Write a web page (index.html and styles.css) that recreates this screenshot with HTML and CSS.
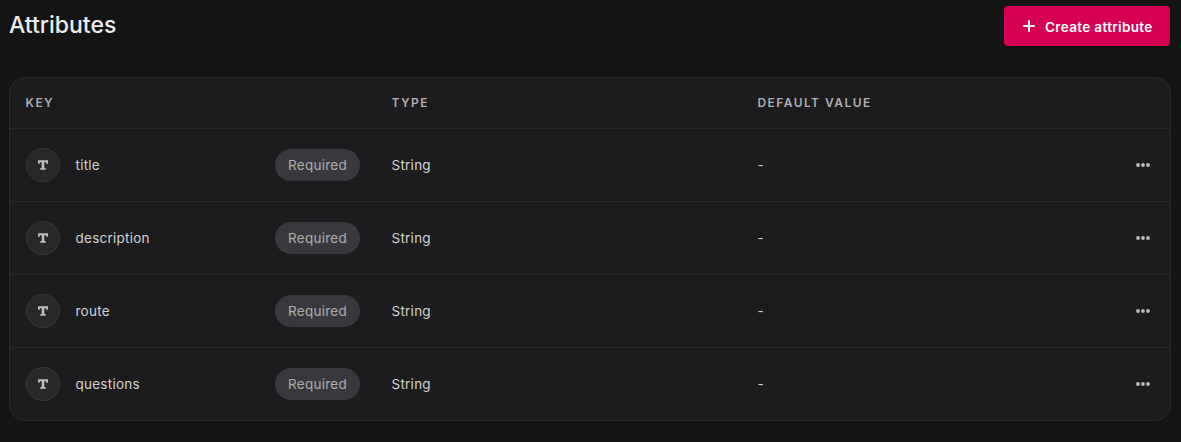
FILE: index.html
```html
<!DOCTYPE html>
<html lang="en">
<head>
<meta charset="utf-8">
<title>Attributes</title>
<link rel="stylesheet" href="styles.css">
</head>
<body>
<svg class="defs" width="0" height="0" aria-hidden="true">
  <symbol id="text-icon" viewBox="0 0 10 10"><path d="M0 .3H10V3.8H8.4L8 2.2H6.3V8L7.8 8.3V9.8H2.2V8.3L3.7 8V2.2H2L1.6 3.8H0Z"/></symbol>
  <symbol id="dots-icon" viewBox="0 0 14 4"><circle cx="2" cy="2" r="1.9"/><circle cx="7" cy="2" r="1.9"/><circle cx="12" cy="2" r="1.9"/></symbol>
</svg>
<header class="page-header">
  <h1 class="heading">Attributes</h1>
  <button class="button"><svg class="plus" viewBox="0 0 12 12"><path d="M6 1v10M1 6h10"/></svg><span class="button-label">Create attribute</span></button>
</header>
<main class="table">
  <div class="row head"><span class="col">Key</span><span class="col">Type</span><span class="col">Default value</span></div>
  <div class="row"><div class="key"><span class="avatar"><svg class="type-icon"><use href="#text-icon"/></svg></span><span class="name">title</span><span class="tag">Required</span></div><span class="cell">String</span><span class="cell">-</span><svg class="dots"><use href="#dots-icon"/></svg></div>
  <div class="row"><div class="key"><span class="avatar"><svg class="type-icon"><use href="#text-icon"/></svg></span><span class="name">description</span><span class="tag">Required</span></div><span class="cell">String</span><span class="cell">-</span><svg class="dots"><use href="#dots-icon"/></svg></div>
  <div class="row"><div class="key"><span class="avatar"><svg class="type-icon"><use href="#text-icon"/></svg></span><span class="name">route</span><span class="tag">Required</span></div><span class="cell">String</span><span class="cell">-</span><svg class="dots"><use href="#dots-icon"/></svg></div>
  <div class="row"><div class="key"><span class="avatar"><svg class="type-icon"><use href="#text-icon"/></svg></span><span class="name">questions</span><span class="tag">Required</span></div><span class="cell">String</span><span class="cell">-</span><svg class="dots"><use href="#dots-icon"/></svg></div>
</main>
</body>
</html>
```
FILE: styles.css
```css
* { box-sizing: border-box; }
body {
  margin: 0;
  padding: 6px 10px 0 9px;
  height: 442px;
  overflow: hidden;
  background: #141414;
  color: #d2d2d5;
  font: 13.5px/20px Inter, sans-serif;
  letter-spacing: 0.25px;
}
.defs { display: none; }
.page-header {
  display: flex;
  justify-content: space-between;
  align-items: flex-start;
  height: 71px;
  padding-right: 1px;
}
.heading {
  margin: 4px 0 0;
  font-size: 23px;
  line-height: 30px;
  font-weight: 500;
  letter-spacing: 0;
  color: #ededf0;
}
.button {
  display: flex;
  align-items: center;
  width: 166px;
  height: 40px;
  padding: 2px 0 0 19px;
  border: 0;
  border-radius: 4px;
  background: #d60052;
  color: #fff;
  font: 600 13.5px/20px Inter, sans-serif;
  letter-spacing: 0.35px;
}
.plus {
  width: 12px;
  height: 12px;
  margin: 0 10px 2px 0;
  fill: none;
  stroke: #fff;
  stroke-width: 2;
  stroke-linecap: round;
}
.button-label { white-space: nowrap; }
.table {
  height: 344px;
  border: 1px solid #29292b;
  border-radius: 16px;
  background: #1c1c1e;
}
.row {
  display: grid;
  grid-template-columns: 366px 366px 1fr 14px;
  align-items: center;
  height: 73px;
  padding: 0 20px 0 15.5px;
  border-top: 1px solid #29292b;
}
.head {
  height: 50px;
  border: 0;
}
.col {
  font-size: 12px;
  font-weight: 600;
  letter-spacing: 1.45px;
  text-transform: uppercase;
  color: #b0b0b3;
}
.key {
  display: flex;
  align-items: center;
  padding: 0 31.5px 0 0.5px;
}
.avatar {
  display: flex;
  align-items: center;
  width: 34px;
  height: 34px;
  padding-left: 10.5px;
  margin-right: 15.5px;
  border: 1px solid #38383b;
  border-radius: 50%;
  background: #28282a;
}
.type-icon {
  width: 10px;
  height: 10px;
  fill: #bcbcbf;
}
.tag {
  width: 85px;
  height: 32px;
  margin-left: auto;
  border-radius: 16px;
  background: #39393d;
  color: #adadb1;
  line-height: 32px;
  text-align: center;
}
.dots {
  width: 14px;
  height: 4px;
  fill: #bcbcbf;
}
```
